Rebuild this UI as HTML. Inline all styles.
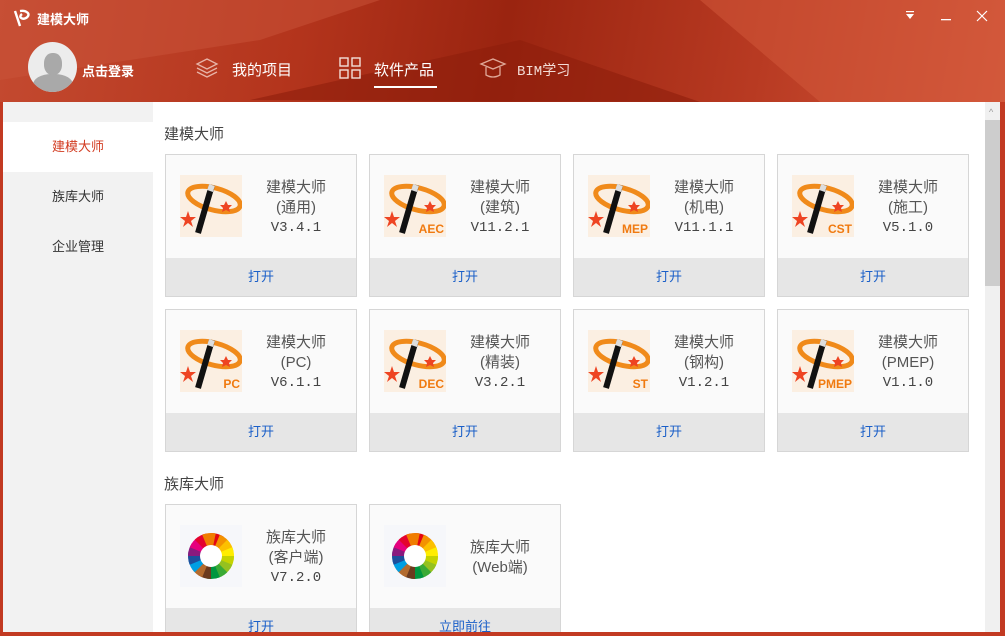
<!DOCTYPE html><html><head><meta charset="utf-8"><style>
*{margin:0;padding:0;box-sizing:border-box}
body{width:1005px;height:636px;overflow:hidden;font-family:"Liberation Sans","Noto Sans CJK SC",sans-serif;background:#c23a22;position:relative}
.hdr{position:absolute;left:0;top:0;width:1005px;height:102px;background:linear-gradient(100deg,#c44a30 0%,#b3341c 30%,#9a2410 50%,#b83a22 75%,#d2573a 100%);overflow:hidden}
.t{position:absolute;color:#fff}
.main{position:absolute;left:3px;top:102px;width:997px;height:530px;background:#fff;overflow:hidden}
.side{position:absolute;left:0;top:0;width:150px;height:530px;background:#f2f2f2}
.si{height:50px;line-height:50px;padding-left:49px;font-size:13px;color:#333}
.si.a{background:#fff;color:#d23b20;margin-top:20px}
.sec{position:absolute;left:161px;font-size:15px;color:#444}
.card{position:absolute;width:192px;height:143px;border:1px solid #d6d6d6;background:#fafafa}
.card .ic{position:absolute;left:14px;top:20px;width:62px;height:62px;background:#fff}
.card .tx{position:absolute;left:70px;right:0;top:23px;text-align:center;font-size:15px;color:#555;line-height:19.5px}
.card .v{font-family:"Liberation Mono","DejaVu Sans Mono",monospace;font-size:14px;color:#444}
.card .b{position:absolute;left:0;right:0;bottom:0;height:38px;background:#e6e6e6;text-align:center;line-height:38px;font-size:13px;color:#1a5fc8}
.sb{position:absolute;left:982px;top:0;width:15px;height:530px;background:#f0f0f0}
</style></head><body>
<div class="hdr">
<svg width="1005" height="102" style="position:absolute;left:0;top:0"><polygon points="0,0 380,0 260,40 0,80" fill="#c9533a" opacity=".5"/><polygon points="250,100 520,40 700,102" fill="#8e1e0c" opacity=".6"/><polygon points="700,0 1005,0 1005,102 820,102" fill="#d35a3c" opacity=".5"/></svg>
<svg style="position:absolute;left:12px;top:8px" width="22" height="20"><path d="M3 3 L8 18 M8 3 C14 2 20 6 14 10 C10 12 6 9 10 6" stroke="#fff" stroke-width="2.4" fill="none"/></svg>
<div class="t" style="left:37px;top:9px;font-size:13px;font-weight:bold">建模大师</div>
<div style="position:absolute;left:28px;top:42px;width:49px;height:50px;border-radius:50%;background:#ececec;overflow:hidden"><div style="position:absolute;left:16px;top:11px;width:18px;height:22px;border-radius:45%;background:#a9a9a9"></div><div style="position:absolute;left:5px;top:32px;width:40px;height:24px;border-radius:45% 45% 0 0;background:#a9a9a9"></div></div>
<div class="t" style="left:82px;top:61px;font-size:13px;font-weight:bold">点击登录</div>
<svg style="position:absolute;left:195px;top:57px" width="24" height="24" fill="none" stroke="#e8b4a8" stroke-width="1.3"><path d="M12 2 L22 7 L12 12 L2 7Z M2 11 L12 16 L22 11 M2 15 L12 20 L22 15"/></svg>
<div class="t" style="left:232px;top:59px;font-size:15px">我的项目</div>
<svg style="position:absolute;left:339px;top:57px" width="22" height="22" fill="none" stroke="#f3e0da" stroke-width="1.4"><rect x="1" y="1" width="8" height="8"/><rect x="13" y="1" width="8" height="8"/><rect x="1" y="13" width="8" height="8"/><rect x="13" y="13" width="8" height="8"/></svg>
<div class="t" style="left:374px;top:59px;font-size:15px">软件产品</div>
<div style="position:absolute;left:374px;top:86px;width:63px;height:2px;background:#fff"></div>
<svg style="position:absolute;left:479px;top:57px" width="28" height="22" fill="none" stroke="#e0a898" stroke-width="1.3"><path d="M2 7 L14 2 L26 7 L14 12Z M7 10 V18 Q14 22 21 18 V10"/></svg>
<div class="t" style="left:517px;top:60px;font-size:14px;font-family:'Liberation Mono','Noto Sans CJK SC',monospace;color:#f3dcd6">BIM学习</div>
<svg style="position:absolute;left:904px;top:9px" width="90" height="14" fill="#fff"><polygon points="2,5 10,5 6,10"/><rect x="2" y="2" width="8" height="1.2"/><rect x="37" y="10" width="10" height="1.3"/><path d="M73 2 L83 12 M83 2 L73 12" stroke="#fff" stroke-width="1.2"/></svg>
</div>
<div class="main">
<div class="side"><div class="si a">建模大师</div><div class="si">族库大师</div><div class="si">企业管理</div></div>
<div class="sec" style="top:21px">建模大师</div>
<div class="sec" style="top:371px">族库大师</div>
<div class="sb"><div style="position:absolute;left:0;top:18px;width:15px;height:166px;background:#cdcdcd"></div><div style="position:absolute;left:4px;top:5px;font-size:9px;color:#999">^</div></div>
<div id="cards"></div>
</div>
<script>
var data=[["(通用)","V3.4.1",""],["(建筑)","V11.2.1","AEC"],["(机电)","V11.1.1","MEP"],["(施工)","V5.1.0","CST"],["(PC)","V6.1.1","PC"],["(精装)","V3.2.1","DEC"],["(钢构)","V1.2.1","ST"],["(PMEP)","V1.1.0","PMEP"]];
var h="";
function wand(l){return '<svg width="62" height="62"><rect width="62" height="62" fill="#fbefe2"/><ellipse cx="34" cy="24" rx="27" ry="11" fill="none" stroke="#f08a1a" stroke-width="5" transform="rotate(15 34 24)"/><line x1="32" y1="10" x2="18" y2="58" stroke="#111" stroke-width="6"/><line x1="32" y1="10" x2="30" y2="16" stroke="#ddd" stroke-width="6"/><polygon points="8,36 10,42 16,42 11,46 13,52 8,48 3,52 5,46 0,42 6,42" fill="#ee4422"/><polygon points="46,26 48,30 52,30 49,33 50,37 46,35 42,37 43,33 40,30 44,30" fill="#ee4422"/><text x="60" y="58" text-anchor="end" font-size="12" font-weight="bold" fill="#f07a10" font-family="Liberation Sans">'+l+'</text></svg>';}
function wheel(){var s='<svg width="62" height="62"><rect width="62" height="62" fill="#f6f7fa"/>';var c=["#e30613","#f39200","#fcc000","#ffed00","#c5d300","#95c11f","#3aaa35","#00963f","#6b3a1e","#b36b2e","#009fe3","#1d4f9c","#8a1a7e","#e6007e","#e4032e","#f07d00"];for(var i=0;i<16;i++){var a=i*22.5;s+='<path d="M31 31 L31 8 A23 23 0 0 1 44 12 Z" fill="'+c[i]+'" transform="rotate('+a+' 31 31)"/>';}return s+'<circle cx="31" cy="31" r="11" fill="#fff"/></svg>';}
for(var i=0;i<8;i++){var x=162+(i%4)*204,y=52+Math.floor(i/4)*155;h+='<div class="card" style="left:'+x+'px;top:'+y+'px"><div class="ic">'+wand(data[i][2])+'</div><div class="tx">建模大师<br>'+data[i][0]+'<br><span class="v">'+data[i][1]+'</span></div><div class="b">打开</div></div>';}
h+='<div class="card" style="left:162px;top:402px"><div class="ic">'+wheel()+'</div><div class="tx">族库大师<br>(客户端)<br><span class="v">V7.2.0</span></div><div class="b">打开</div></div>';
h+='<div class="card" style="left:366px;top:402px"><div class="ic">'+wheel()+'</div><div class="tx" style="top:33px">族库大师<br>(Web端)</div><div class="b">立即前往</div></div>';
document.getElementById("cards").innerHTML=h;
</script>
</body></html>
